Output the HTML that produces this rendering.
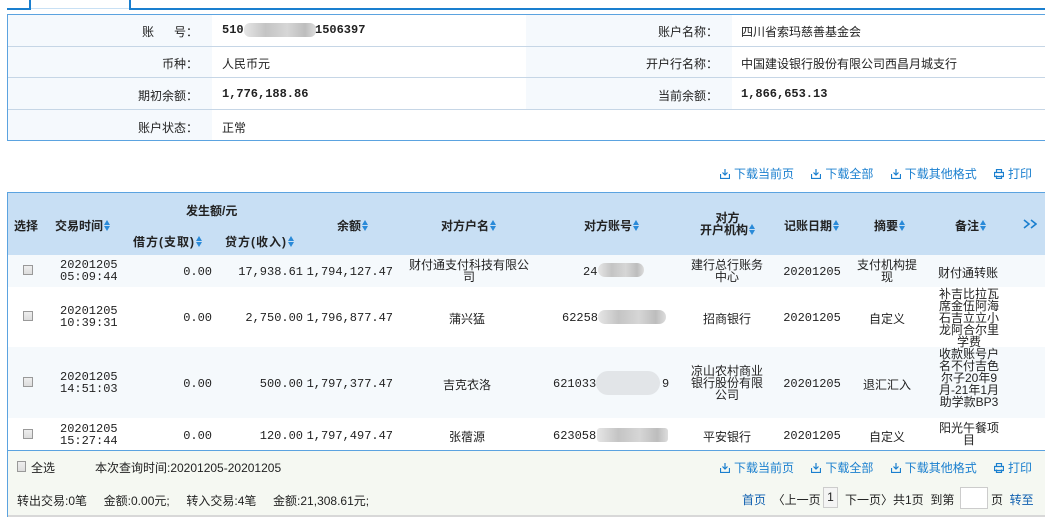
<!DOCTYPE html>
<html><head><meta charset="utf-8">
<style>
*{margin:0;padding:0;box-sizing:border-box}
body{width:1045px;height:517px;overflow:hidden;background:#fff;font-family:"Liberation Sans","Noto Sans CJK SC",sans-serif;font-size:12px;color:#222;position:relative}
.a{position:absolute;white-space:nowrap}
.b{font-weight:bold}
.m{font-family:"Liberation Mono","Noto Sans CJK SC",monospace;font-size:12px}
.lk{color:#1a7fcf}
.c{text-align:center;transform:translateX(-50%)}
.r{text-align:right;transform:translateX(-100%)}
.ml{line-height:12px;white-space:normal;text-align:center}
.sort{display:inline-block;width:6px;height:12px;vertical-align:-2px;margin-left:1px;position:relative}
.sort:before{content:"";position:absolute;left:0;top:0;border-left:3px solid transparent;border-right:3px solid transparent;border-bottom:5px solid #2a8ad8}
.sort:after{content:"";position:absolute;left:0;top:6px;border-left:3px solid transparent;border-right:3px solid transparent;border-top:5px solid #2a8ad8}
.cb{position:absolute;left:23px;width:10px;height:10px;border:1px solid #999;background:linear-gradient(#eee,#ddd)}
.blur{position:absolute;height:14px;border-radius:7px;background:linear-gradient(90deg,#e6e6e6,#c4c4c4 30%,#d6d6d6 60%,#bdbdbd 85%,#ddd)}
.ic{display:inline-block;width:10px;height:10px;vertical-align:-1px;margin-right:4px}
</style></head><body>
<div class="a" style="left:7px;top:8px;width:23px;height:2px;background:#1a7fcf"></div>
<div class="a" style="left:29px;top:0;width:2px;height:10px;background:#1a7fcf"></div>
<div class="a" style="left:31px;top:8px;width:98px;height:1px;background:#c8e0f4"></div>
<div class="a" style="left:129px;top:0;width:2px;height:10px;background:#1a7fcf"></div>
<div class="a" style="left:131px;top:8px;width:914px;height:2px;background:#1a7fcf"></div>

<div class="a" style="left:7px;top:14px;width:1040px;height:127px;border:1px solid #5ba3e0;border-right:none"></div>
<div class="a" style="left:8px;top:15px;width:204px;height:125px;background:#f5f9fd"></div>
<div class="a" style="left:526px;top:15px;width:206px;height:94px;background:#f5f9fd"></div>
<div class="a" style="left:8px;top:46px;width:1037px;height:1px;background:#c6d6e6"></div>
<div class="a" style="left:8px;top:77px;width:1037px;height:1px;background:#c6d6e6"></div>
<div class="a" style="left:8px;top:109px;width:1037px;height:1px;background:#c6d6e6"></div>

<div class="a r" style="left:198px;top:23px">账&nbsp;&nbsp;&nbsp;&nbsp;&nbsp;&nbsp;号：</div>
<div class="a b m" style="left:222px;top:23px">510</div>
<div class="blur" style="left:244px;top:23px;width:72px;border-radius:6px"></div>
<div class="a b m" style="left:315px;top:23px">1506397</div>
<div class="a r" style="left:198px;top:55px">币种：</div>
<div class="a" style="left:222px;top:55px">人民币元</div>
<div class="a r" style="left:198px;top:87px">期初余额：</div>
<div class="a b m" style="left:222px;top:87px">1,776,188.86</div>
<div class="a r" style="left:198px;top:119px">账户状态：</div>
<div class="a" style="left:222px;top:119px">正常</div>

<div class="a r" style="left:718px;top:23px">账户名称：</div>
<div class="a" style="left:741px;top:23px">四川省索玛慈善基金会</div>
<div class="a r" style="left:718px;top:55px">开户行名称：</div>
<div class="a" style="left:741px;top:55px">中国建设银行股份有限公司西昌月城支行</div>
<div class="a r" style="left:718px;top:87px">当前余额：</div>
<div class="a b m" style="left:741px;top:87px">1,866,653.13</div>

<div class="a lk" style="left:720px;top:165px">
<svg class="ic" viewBox="0 0 10 10"><path d="M5 0v6M2.5 3.5L5 6l2.5-2.5M0.5 5v4.5h9V5" fill="none" stroke="#1a7fcf" stroke-width="1.2"/></svg>下载当前页
<span style="margin-left:14px"></span><svg class="ic" viewBox="0 0 10 10"><path d="M5 0v6M2.5 3.5L5 6l2.5-2.5M0.5 5v4.5h9V5" fill="none" stroke="#1a7fcf" stroke-width="1.2"/></svg>下载全部
<span style="margin-left:14px"></span><svg class="ic" viewBox="0 0 10 10"><path d="M5 0v6M2.5 3.5L5 6l2.5-2.5M0.5 5v4.5h9V5" fill="none" stroke="#1a7fcf" stroke-width="1.2"/></svg>下载其他格式
<span style="margin-left:14px"></span><svg class="ic" viewBox="0 0 10 10"><path d="M2.5 3.5V0.5h5v3M0.5 3.5h9v4h-9zM2.5 6.5v3h5v-3" fill="none" stroke="#1a7fcf" stroke-width="1.2"/></svg>打印
</div>

<div class="a" style="left:7px;top:192px;width:1040px;height:325px;border-left:1px solid #5ba3e0;border-top:1px solid #5ba3e0"></div>
<div class="a" style="left:8px;top:193px;width:1037px;height:62px;background:#c8dff4"></div>
<div class="a" style="left:8px;top:255px;width:1037px;height:32px;background:#f5f9fc"></div>
<div class="a" style="left:8px;top:347px;width:1037px;height:71px;background:#f5f9fc"></div>

<div class="a b" style="left:14px;top:217px">选择</div>
<div class="a b" style="left:55px;top:217px">交易时间<span class="sort"></span></div>
<div class="a b" style="left:186px;top:202px">发生额/元</div>
<div class="a b" style="left:133px;top:233px;letter-spacing:1px">借方(支取)<span class="sort"></span></div>
<div class="a b" style="left:225px;top:233px;letter-spacing:1px">贷方(收入)<span class="sort"></span></div>
<div class="a b" style="left:337px;top:217px">余额<span class="sort"></span></div>
<div class="a b" style="left:441px;top:217px">对方户名<span class="sort"></span></div>
<div class="a b" style="left:584px;top:217px">对方账号<span class="sort"></span></div>
<div class="a b" style="left:700px;top:212px;line-height:12px;text-align:center">对方<br>开户机构<span class="sort"></span></div>
<div class="a b" style="left:784px;top:217px">记账日期<span class="sort"></span></div>
<div class="a b" style="left:874px;top:217px">摘要<span class="sort"></span></div>
<div class="a b" style="left:955px;top:217px">备注<span class="sort"></span></div>
<svg class="a" style="left:1023px;top:219px" width="14" height="10" viewBox="0 0 14 10"><path d="M1 1l5 4-5 4M8 1l5 4-5 4" fill="none" stroke="#1a7fcf" stroke-width="1.6"/></svg>

<div class="cb" style="top:265px"></div>
<div class="a ml m" style="left:60px;top:259px;width:58px;text-align:left">20201205 05:09:44</div>
<div class="a m r" style="left:212px;top:265px">0.00</div>
<div class="a m r" style="left:303px;top:265px">17,938.61</div>
<div class="a m r" style="left:393px;top:265px">1,794,127.47</div>
<div class="a ml" style="left:408px;top:259px;width:122px">财付通支付科技有限公司</div>
<div class="a m" style="left:583px;top:265px">24</div>
<div class="blur" style="left:598px;top:263px;width:46px"></div>
<div class="a ml" style="left:690px;top:259px;width:74px">建行总行账务中心</div>
<div class="a m c" style="left:812px;top:265px">20201205</div>
<div class="a ml" style="left:856px;top:259px;width:62px">支付机构提现</div>
<div class="a" style="left:938px;top:264px">财付通转账</div>

<div class="cb" style="top:311px"></div>
<div class="a ml m" style="left:60px;top:305px;width:58px;text-align:left">20201205 10:39:31</div>
<div class="a m r" style="left:212px;top:311px">0.00</div>
<div class="a m r" style="left:303px;top:311px">2,750.00</div>
<div class="a m r" style="left:393px;top:311px">1,796,877.47</div>
<div class="a c" style="left:467px;top:310px">蒲兴猛</div>
<div class="a m" style="left:562px;top:311px">62258</div>
<div class="blur" style="left:598px;top:310px;width:68px"></div>
<div class="a c" style="left:727px;top:310px">招商银行</div>
<div class="a m c" style="left:812px;top:311px">20201205</div>
<div class="a c" style="left:887px;top:310px">自定义</div>
<div class="a ml" style="left:938px;top:288px;width:62px">补吉比拉瓦席金伍阿海石吉立立小龙阿合尔里学费</div>

<div class="cb" style="top:377px"></div>
<div class="a ml m" style="left:60px;top:371px;width:58px;text-align:left">20201205 14:51:03</div>
<div class="a m r" style="left:212px;top:377px">0.00</div>
<div class="a m r" style="left:303px;top:377px">500.00</div>
<div class="a m r" style="left:393px;top:377px">1,797,377.47</div>
<div class="a c" style="left:467px;top:376px">吉克衣洛</div>
<div class="a m" style="left:553px;top:377px">621033</div>
<div class="blur" style="left:596px;top:371px;width:64px;height:24px;border-radius:12px;background:#e2e5e8"></div>
<div class="a m" style="left:662px;top:377px">9</div>
<div class="a ml" style="left:690px;top:365px;width:74px">凉山农村商业银行股份有限公司</div>
<div class="a m c" style="left:812px;top:377px">20201205</div>
<div class="a c" style="left:887px;top:376px">退汇汇入</div>
<div class="a ml" style="left:938px;top:348px;width:62px">收款账号户名不付吉色尔子20年9月-21年1月助学款BP3</div>

<div class="cb" style="top:429px"></div>
<div class="a ml m" style="left:60px;top:423px;width:58px;text-align:left">20201205 15:27:44</div>
<div class="a m r" style="left:212px;top:429px">0.00</div>
<div class="a m r" style="left:303px;top:429px">120.00</div>
<div class="a m r" style="left:393px;top:429px">1,797,497.47</div>
<div class="a c" style="left:467px;top:428px">张蓿源</div>
<div class="a m" style="left:553px;top:429px">623058</div>
<div class="blur" style="left:597px;top:428px;width:71px;border-radius:3px"></div>
<div class="a c" style="left:727px;top:428px">平安银行</div>
<div class="a m c" style="left:812px;top:429px">20201205</div>
<div class="a c" style="left:887px;top:428px">自定义</div>
<div class="a ml" style="left:938px;top:422px;width:62px">阳光午餐项目</div>

<div class="a" style="left:8px;top:450px;width:1037px;height:66px;background:#f5f8f2;border-top:1px solid #5ba3e0"></div>
<div class="a" style="left:8px;top:515px;width:1037px;height:2px;background:#d8d8d8"></div>
<div class="cb" style="top:461px;left:17px;width:9px;height:11px"></div>
<div class="a" style="left:31px;top:459px">全选</div>
<div class="a" style="left:95px;top:459px">本次查询时间:20201205-20201205</div>
<div class="a lk" style="left:720px;top:459px">
<svg class="ic" viewBox="0 0 10 10"><path d="M5 0v6M2.5 3.5L5 6l2.5-2.5M0.5 5v4.5h9V5" fill="none" stroke="#1a7fcf" stroke-width="1.2"/></svg>下载当前页
<span style="margin-left:14px"></span><svg class="ic" viewBox="0 0 10 10"><path d="M5 0v6M2.5 3.5L5 6l2.5-2.5M0.5 5v4.5h9V5" fill="none" stroke="#1a7fcf" stroke-width="1.2"/></svg>下载全部
<span style="margin-left:14px"></span><svg class="ic" viewBox="0 0 10 10"><path d="M5 0v6M2.5 3.5L5 6l2.5-2.5M0.5 5v4.5h9V5" fill="none" stroke="#1a7fcf" stroke-width="1.2"/></svg>下载其他格式
<span style="margin-left:14px"></span><svg class="ic" viewBox="0 0 10 10"><path d="M2.5 3.5V0.5h5v3M0.5 3.5h9v4h-9zM2.5 6.5v3h5v-3" fill="none" stroke="#1a7fcf" stroke-width="1.2"/></svg>打印
</div>
<div class="a" style="left:17px;top:492px">转出交易:0笔&nbsp;&nbsp;&nbsp;&nbsp;&nbsp;金额:0.00元;&nbsp;&nbsp;&nbsp;&nbsp;&nbsp;转入交易:4笔&nbsp;&nbsp;&nbsp;&nbsp;&nbsp;金额:21,308.61元;</div>
<div class="a" style="left:742px;top:491px"><span style="color:#1060b0">首页</span>&nbsp;&nbsp;〈上一页</div>
<div class="a" style="left:823px;top:487px;width:15px;height:21px;border:1px solid #ccc;background:#f4f4f4;text-align:center;line-height:19px">1</div>
<div class="a" style="left:845px;top:491px">下一页〉共1页&nbsp;&nbsp;到第</div>
<div class="a" style="left:960px;top:487px;width:28px;height:22px;border:1px solid #ccc;background:#fff"></div>
<div class="a" style="left:991px;top:491px">页&nbsp;&nbsp;<span style="color:#1060b0">转至</span></div>
</body></html>
